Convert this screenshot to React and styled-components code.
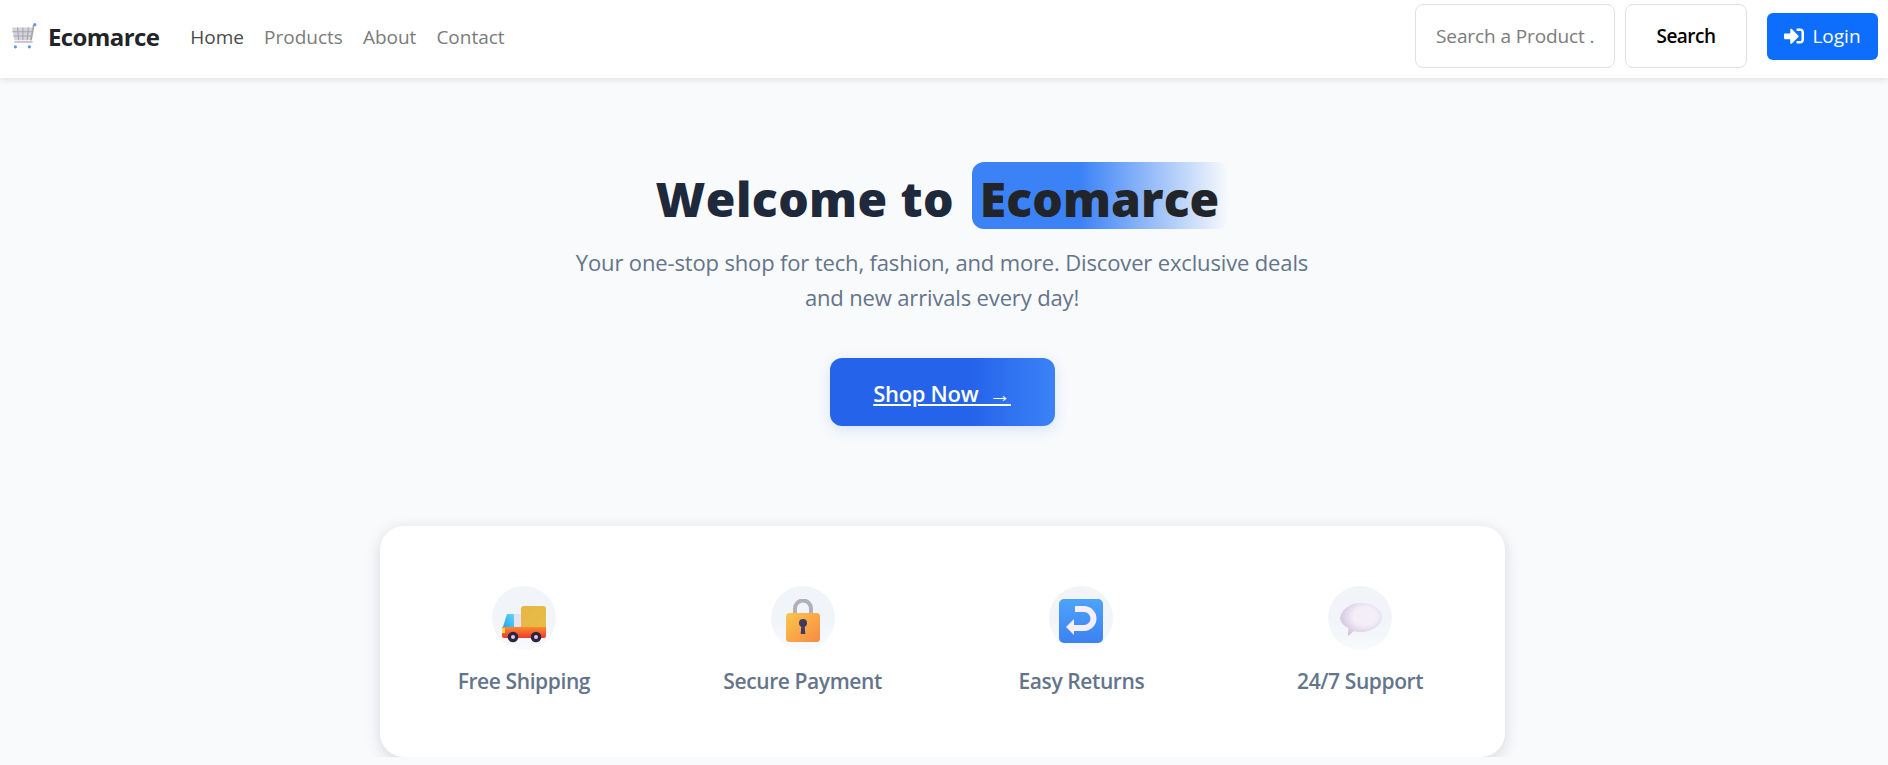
import React from 'react';
import styled, { createGlobalStyle } from 'styled-components';
import { FaSignInAlt } from 'react-icons/fa';

const GlobalStyle = createGlobalStyle`
  html, body {
    margin: 0;
    padding: 0;
    background: #f8fafc;
    font-family: "Open Sans", "Noto Sans", sans-serif;
  }
  * { box-sizing: border-box; }
`;

const Navbar = styled.nav`
  display: flex;
  align-items: center;
  height: 78px;
  padding: 0 10px 6px;
  background: #fff;
  box-shadow: 0 2px 6px rgba(15, 23, 42, 0.1);
`;

const Brand = styled.a`
  display: flex;
  align-items: center;
  gap: 10px;
  margin-right: 31px;
  color: #212529;
  font-size: 24px;
  font-weight: 700;
  letter-spacing: -0.6px;
`;

const NavLinks = styled.div`
  display: flex;
  gap: 20px;
  padding-top: 2px;
`;

const NavLink = styled.a`
  color: ${({ $active }) => ($active ? '#4a4a4a' : '#7b7b7b')};
  font-size: 19px;
  letter-spacing: 0;
`;

const SearchForm = styled.form`
  display: flex;
  align-items: center;
  gap: 10px;
  margin-left: auto;
  margin-right: 20px;
`;

const SearchInput = styled.input`
  width: 200px;
  height: 64px;
  padding: 0 20px;
  border: 1px solid #dee2e6;
  border-radius: 8px;
  background: #fff;
  font-family: inherit;
  font-size: 19px;
  letter-spacing: -0.1px;
  &::placeholder { color: #7b7b7b; opacity: 1; }
`;

const SearchButton = styled.button`
  width: 122px;
  height: 64px;
  border: 1px solid #dee2e6;
  border-radius: 8px;
  background: #fff;
  color: #000;
  font-family: inherit;
  font-size: 19px;
  font-weight: 600;
  letter-spacing: -0.5px;
`;

const LoginButton = styled.button`
  display: flex;
  align-items: center;
  justify-content: center;
  gap: 8px;
  width: 111px;
  height: 47px;
  border: none;
  border-radius: 6px;
  background: #0d6efd;
  color: #fff;
  font-family: inherit;
  font-size: 19px;
  letter-spacing: 0;
`;

const Main = styled.main`
  padding-right: 4px;
`;

const Hero = styled.section`
  display: flex;
  flex-direction: column;
  align-items: center;
  padding-top: 84px;
  text-align: center;
`;

const Title = styled.h1`
  margin: 0;
  padding-top: 7px;
  color: #1e293b;
  font-size: 48px;
  font-weight: 800;
  line-height: 60px;
  letter-spacing: 0.4px;
`;

const Highlight = styled.span`
  display: inline-block;
  margin-left: 5px;
  margin-top: -7px;
  padding: 7px 9px 0 8px;
  border-radius: 12px;
  background: linear-gradient(90deg, #3b82f6 42%, #f8fafc 100%);
  color: #212529;
  letter-spacing: 0.1px;
`;

const Lead = styled.p`
  width: 760px;
  margin: 16px 0 0;
  color: #64748b;
  font-size: 22px;
  line-height: 35px;
  letter-spacing: -0.15px;
`;

const ShopButton = styled.a`
  display: flex;
  align-items: center;
  justify-content: center;
  width: 225px;
  height: 68px;
  margin-top: 43px;
  padding-top: 2px;
  border-radius: 12px;
  background: linear-gradient(90deg, #2563eb 62%, #3b82f6 100%);
  box-shadow: 0 4px 14px rgba(37, 99, 235, 0.15);
  color: #fff;
  font-size: 22px;
  font-weight: 600;
  letter-spacing: -0.3px;
  text-decoration: underline;
  white-space: pre;
`;

const FeatureCard = styled.section`
  display: grid;
  grid-template-columns: repeat(4, 1fr);
  width: 1125px;
  height: 231px;
  margin: 100px auto 0;
  padding: 60px 5px 0;
  border-radius: 24px;
  background: #fff;
  box-shadow: 0 4px 16px rgba(15, 23, 42, 0.14);
`;

const Feature = styled.div`
  display: flex;
  flex-direction: column;
  align-items: center;
  gap: 17px;
`;

const IconCircle = styled.div`
  display: flex;
  align-items: flex-start;
  justify-content: center;
  width: 64px;
  height: 64px;
  padding-top: 13px;
  border-radius: 50%;
  background: linear-gradient(180deg, #f1f5f9 55%, #f8fafc 100%);
  svg { flex-shrink: 0; }
`;

const FeatureLabel = styled.span`
  color: #64748b;
  font-size: 21px;
  font-weight: 600;
  letter-spacing: -0.4px;
`;

const CartIcon = () => (
  <svg width="28" height="28" viewBox="0 0 26 26">
    <path d="M2 5h19l-1.500 12H4z" fill="#d6d3da" />
    <path d="M2 9h19M3 13h17M7 5l1 12M12 5v12M17 5l-1 12" stroke="#a8a6ad" strokeWidth="1" fill="none" />
    <path d="M4 18.500h17" stroke="#c6bcd6" strokeWidth="1.600" />
    <path d="M19.500 17L22 3" stroke="#a8a6ad" strokeWidth="1.600" />
    <circle cx="23" cy="2.500" r="1.500" fill="#5b9bec" />
    <circle cx="5" cy="23" r="1.500" fill="#5b9bec" />
    <circle cx="18" cy="23" r="1.500" fill="#5b9bec" />
  </svg>
);

const TruckIcon = () => (
  <svg width="44" height="44" viewBox="0 0 44 44">
    <defs>
      <linearGradient id="cargo" x1="0" y1="0" x2="1" y2="1">
        <stop offset="0" stopColor="#e8b544" />
        <stop offset="1" stopColor="#e6bd4a" />
      </linearGradient>
      <linearGradient id="body" x1="0" y1="0" x2="0" y2="1">
        <stop offset="0" stopColor="#fb8a2e" />
        <stop offset="1" stopColor="#ee3b2f" />
      </linearGradient>
      <linearGradient id="glass" x1="0" y1="1" x2="1" y2="0">
        <stop offset="0" stopColor="#1ea7f2" />
        <stop offset="1" stopColor="#64d3f7" />
      </linearGradient>
    </defs>
    <path d="M19 10a3 3 0 0 1 3-3h19a3 3 0 0 1 3 3v19H19z" fill="url(#cargo)" />
    <path d="M6 15h13v14H0z" fill="#e6e2ee" />
    <path d="M5 15h7v13H1z" fill="url(#glass)" />
    <path d="M0 28h44v9a2 2 0 0 1-2 2H2a2 2 0 0 1-2-2z" fill="url(#body)" />
    <rect x="0" y="29" width="3" height="5" fill="#ffd84a" />
    <circle cx="11" cy="38" r="5.300" fill="#2f2440" />
    <circle cx="11" cy="38" r="2" fill="#d9c9ee" />
    <circle cx="34" cy="38" r="5.300" fill="#2f2440" />
    <circle cx="34" cy="38" r="2" fill="#d9c9ee" />
  </svg>
);

const LockIcon = () => (
  <svg width="44" height="44" viewBox="0 0 44 44">
    <defs>
      <linearGradient id="lock" x1="0" y1="0" x2="1" y2="1">
        <stop offset="0" stopColor="#fcc64a" />
        <stop offset="1" stopColor="#f78a45" />
      </linearGradient>
    </defs>
    <path d="M14 16V9.500a8 8 0 0 1 16 0V16" fill="none" stroke="#b3aebb" strokeWidth="4" />
    <rect x="5" y="14" width="34" height="29" rx="3.500" fill="url(#lock)" />
    <circle cx="22" cy="24" r="4" fill="#3f3a5e" />
    <path d="M20.500 25h3l.8 10h-4.600z" fill="#3f3a5e" />
  </svg>
);

const ReturnIcon = () => (
  <svg width="44" height="44" viewBox="0 0 44 44">
    <defs>
      <linearGradient id="ret" x1="0" y1="0" x2="0" y2="1">
        <stop offset="0" stopColor="#4da3fb" />
        <stop offset="1" stopColor="#3c82f0" />
      </linearGradient>
    </defs>
    <rect x="0" y="0" width="44" height="44" rx="5" fill="url(#ret)" />
    <path d="M16 10h9a9.500 9.500 0 0 1 0 19H13" fill="none" stroke="#f6eefc" strokeWidth="6" />
    <path d="M7 28l8-8v16z" fill="#f6eefc" />
  </svg>
);

const ChatIcon = () => (
  <svg width="44" height="44" viewBox="0 0 44 44">
    <defs>
      <radialGradient id="chat" cx="0.6" cy="0.4" r="0.7">
        <stop offset="0.4" stopColor="#f3eef7" />
        <stop offset="1" stopColor="#cbbcdc" />
      </radialGradient>
    </defs>
    <path d="M23 4c11 0 21 6 21 14 0 8-10 15-21 15-3 0-5-.3-7-1l-6 5 .5-8C6 27 3 24 2 19 4 10 12 4 23 4z" fill="url(#chat)" />
  </svg>
);

const features = [
  { label: 'Free Shipping', icon: <TruckIcon /> },
  { label: 'Secure Payment', icon: <LockIcon /> },
  { label: 'Easy Returns', icon: <ReturnIcon /> },
  { label: '24/7 Support', icon: <ChatIcon /> },
];

const App = () => (
  <>
    <GlobalStyle />
    <Navbar>
      <Brand>
        <CartIcon />
        Ecomarce
      </Brand>
      <NavLinks>
        <NavLink $active>Home</NavLink>
        <NavLink>Products</NavLink>
        <NavLink>About</NavLink>
        <NavLink>Contact</NavLink>
      </NavLinks>
      <SearchForm>
        <SearchInput placeholder="Search a Product ..." />
        <SearchButton type="button">Search</SearchButton>
      </SearchForm>
      <LoginButton>
        <FaSignInAlt size={20} />
        Login
      </LoginButton>
    </Navbar>
    <Main>
      <Hero>
        <Title>
          Welcome to <Highlight>Ecomarce</Highlight>
        </Title>
        <Lead>
          Your one-stop shop for tech, fashion, and more. Discover exclusive deals
          <br />
          and new arrivals every day!
        </Lead>
        <ShopButton>{'Shop Now  →'}</ShopButton>
      </Hero>
      <FeatureCard>
        {features.map(({ label, icon }) => (
          <Feature key={label}>
            <IconCircle>{icon}</IconCircle>
            <FeatureLabel>{label}</FeatureLabel>
          </Feature>
        ))}
      </FeatureCard>
    </Main>
  </>
);

export default App;
